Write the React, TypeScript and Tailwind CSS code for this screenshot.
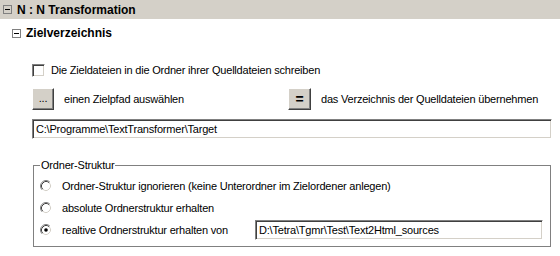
import React from 'react';

const Toggle = () => (
  <div className="w-[9px] h-[9px] border border-[#808080] flex items-center justify-center shrink-0">
    <div className="w-[5px] h-px bg-black" />
  </div>
);

const Checkbox = () => (
  <div className="w-[13px] h-[13px] shrink-0 bg-white border border-t-[#808080] border-l-[#808080] border-b-white border-r-white shadow-[inset_1px_1px_0_#404040,inset_-1px_-1px_0_#d4d0c8]" />
);

const Radio = ({ checked }: { checked?: boolean }) => (
  <svg width="12" height="12" viewBox="0 0 12 12" className="shrink-0">
    <circle cx="6" cy="6" r="5.5" fill="#ffffff" />
    <path d="M2.11 9.89 A5.5 5.5 0 0 1 9.89 2.11" fill="none" stroke="#808080" />
    <path d="M9.89 2.11 A5.5 5.5 0 0 1 2.11 9.89" fill="none" stroke="#ffffff" />
    <path d="M2.82 9.18 A4.5 4.5 0 0 1 9.18 2.82" fill="none" stroke="#404040" />
    <path d="M9.18 2.82 A4.5 4.5 0 0 1 2.82 9.18" fill="none" stroke="#d4d0c8" />
    {checked && <circle cx="6" cy="6" r="1.8" fill="#000000" />}
  </svg>
);

const Button = ({ children, className = '' }: { children: React.ReactNode; className?: string }) => (
  <button
    className={`h-[22px] shrink-0 bg-[#d4d0c8] border border-t-white border-l-white border-b-[#404040] border-r-[#404040] shadow-[inset_-1px_-1px_0_#808080] flex items-center justify-center ${className}`}
  >
    {children}
  </button>
);

const Field = ({ value, className = '' }: { value: string; className?: string }) => (
  <div
    className={`h-[20px] shrink-0 bg-white border border-t-[#808080] border-l-[#808080] border-b-white border-r-white shadow-[inset_1px_1px_0_#404040,inset_-1px_-1px_0_#d4d0c8] flex items-center pl-[3px] whitespace-nowrap overflow-hidden ${className}`}
  >
    {value}
  </div>
);

export default function App() {
  return (
    <div className="w-[560px] h-[256px] overflow-hidden bg-white text-black text-[11px] leading-none tracking-[-0.2px] font-['Liberation_Sans',Arial,sans-serif]">
      <div className="h-[19px] bg-[#d4d0c8] flex items-center pl-[3px] gap-[5px]">
        <Toggle />
        <span className="text-[12px] font-bold tracking-normal">N : N Transformation</span>
      </div>

      <div className="h-[14px] mt-[7px] flex items-center pl-[12px] gap-[5px]">
        <Toggle />
        <span className="text-[12px] font-bold tracking-normal">Zielverzeichnis</span>
      </div>

      <div className="pl-[32px] pr-[8px]">
        <label className="h-[13px] mt-[24px] flex items-center gap-[6px]">
          <Checkbox />
          <span>Die Zieldateien in die Ordner ihrer Quelldateien schreiben</span>
        </label>

        <div className="h-[22px] mt-[11px] flex items-center">
          <div className="w-[256px] flex items-center gap-[10px]">
            <Button className="w-[22px] text-[11px] pb-[2px]">...</Button>
            <span>einen Zielpfad auswählen</span>
          </div>
          <div className="flex items-center gap-[10px]">
            <Button className="w-[23px] text-[14px] font-bold">=</Button>
            <span>das Verzeichnis der Quelldateien übernehmen</span>
          </div>
        </div>

        <Field className="mt-[9px] w-[520px]" value={'C:\\Programme\\TextTransformer\\Target'} />

        <fieldset className="mt-[20px] ml-px w-[518px] border border-[#808080] pl-[6px] pt-[4px] pb-[5px]">
          <legend className="px-px leading-[12px]">Ordner-Struktur</legend>
          <div className="h-[22px] flex items-center gap-[10px]">
            <Radio />
            <span>Ordner-Struktur ignorieren (keine Unterordner im Zielordener anlegen)</span>
          </div>
          <div className="h-[22px] flex items-center gap-[10px]">
            <Radio />
            <span>absolute Ordnerstruktur erhalten</span>
          </div>
          <div className="h-[22px] flex items-center gap-[10px]">
            <Radio checked />
            <span className="w-[183px]">realtive Ordnerstruktur erhalten von</span>
            <Field className="w-[288px]" value={'D:\\Tetra\\Tgmr\\Test\\Text2Html_sources'} />
          </div>
        </fieldset>
      </div>
    </div>
  );
}
